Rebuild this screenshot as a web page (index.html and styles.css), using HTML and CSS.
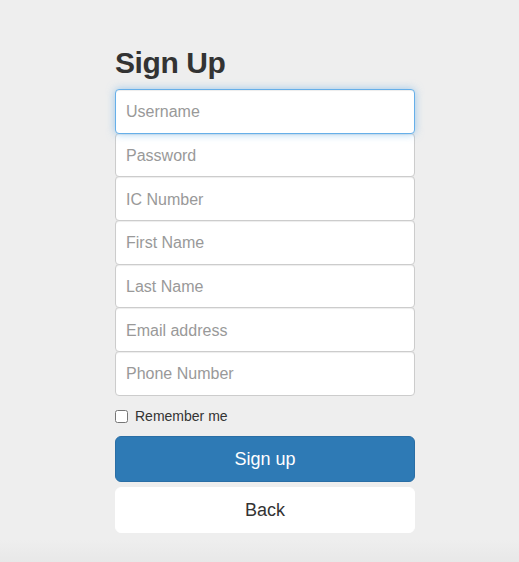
FILE: index.html
```html
<!DOCTYPE html>
<html lang="en">
<head>
<meta charset="utf-8">
<title>Sign Up</title>
<link rel="stylesheet" href="styles.css">
</head>
<body>
<div class="page">
  <form class="signup">
    <h2 class="signup-title">Sign Up</h2>
    <input class="field is-focus" type="text" placeholder="Username">
    <input class="field" type="password" placeholder="Password">
    <input class="field" type="text" placeholder="IC Number">
    <input class="field" type="text" placeholder="First Name">
    <input class="field" type="text" placeholder="Last Name">
    <input class="field" type="email" placeholder="Email address">
    <input class="field" type="text" placeholder="Phone Number">
    <div class="remember">
      <label class="remember-label"><input class="remember-box" type="checkbox"> Remember me</label>
    </div>
    <button class="btn btn-primary" type="button">Sign up</button>
    <button class="btn btn-default" type="button">Back</button>
  </form>
</div>
</body>
</html>
```

FILE: styles.css
```css
html {
  background: linear-gradient(to bottom, #eeeeee 0, #eeeeee 540px, #e8e8e8 562px);
  min-height: 100%;
}
body {
  margin: 0;
  font-family: "Liberation Sans", Arial, Helvetica, sans-serif;
  color: #333;
  font-size: 14px;
  line-height: 1.42857;
}
.page {
  padding: 46px 0 0 115px;
}
.signup {
  width: 300px;
  display: flex;
  flex-direction: column;
}
.signup-title {
  margin: 0 0 10px;
  font-size: 30px;
  line-height: 33px;
  font-weight: 700;
  letter-spacing: -0.4px;
  color: #333;
}
.field {
  box-sizing: border-box;
  display: block;
  width: 100%;
  height: 44.7px;
  margin: 0 0 -1px;
  padding: 11px 10px 9px;
  font-family: inherit;
  font-size: 16px;
  color: #555;
  background: #fff;
  border: 1px solid #ccc;
  border-radius: 4px;
  box-shadow: inset 0 1px 1px rgba(0,0,0,.075);
  outline: none;
  position: relative;
}
.field::placeholder {
  color: #999;
}
.field:last-of-type {
  margin-bottom: 0;
}
.is-focus {
  border-color: #66afe9;
  box-shadow: inset 0 1px 1px rgba(0,0,0,.075), 0 0 8px rgba(102,175,233,.6);
  z-index: 2;
}
.remember {
  margin: 10px 0;
  line-height: 20px;
}
.remember-label {
  display: flex;
  align-items: flex-start;
  font-size: 14px;
  color: #333;
}
.remember-box {
  width: 13px;
  height: 13px;
  margin: 4px 7px 0 0;
}
.btn {
  box-sizing: border-box;
  display: block;
  width: 100%;
  height: 46px;
  padding: 10px 16px;
  font-family: inherit;
  font-size: 18px;
  line-height: 24px;
  border-radius: 6px;
  cursor: pointer;
}
.btn-primary {
  color: #fff;
  background: #2e7ab5;
  border: 1px solid #2a6ea5;
}
.btn-default {
  margin-top: 5px;
  color: #333;
  background: #fff;
  border: 1px solid #fff;
}
```
